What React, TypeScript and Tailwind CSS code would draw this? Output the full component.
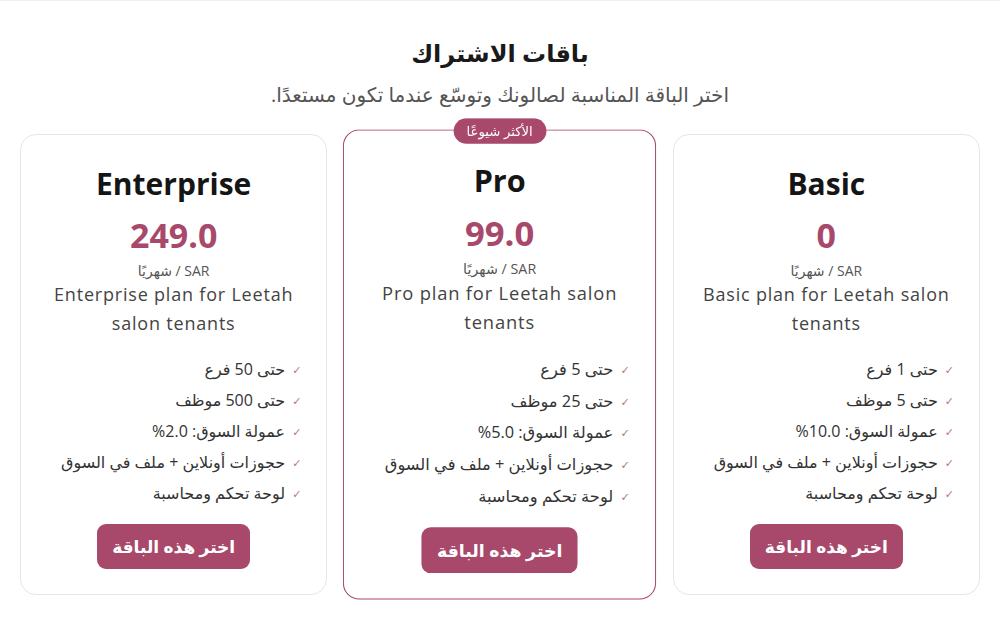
import React from "react";

const PLANS = [
  {
    name: "Basic",
    price: "0",
    desc: "Basic plan for Leetah salon tenants",
    features: ["حتى 1 فرع", "حتى 5 موظف", "عمولة السوق: 10.0%", "حجوزات أونلاين + ملف في السوق", "لوحة تحكم ومحاسبة"],
    popular: false,
  },
  {
    name: "Pro",
    price: "99.0",
    desc: "Pro plan for Leetah salon tenants",
    features: ["حتى 5 فرع", "حتى 25 موظف", "عمولة السوق: 5.0%", "حجوزات أونلاين + ملف في السوق", "لوحة تحكم ومحاسبة"],
    popular: true,
  },
  {
    name: "Enterprise",
    price: "249.0",
    desc: "Enterprise plan for Leetah salon tenants",
    features: ["حتى 50 فرع", "حتى 500 موظف", "عمولة السوق: 2.0%", "حجوزات أونلاين + ملف في السوق", "لوحة تحكم ومحاسبة"],
    popular: false,
  },
];

const FONT = "[font-family:'Open_Sans','DejaVu_Sans',sans-serif]";

export default function App() {
  return (
    <div dir="rtl" className={`min-h-[635px] bg-white border-t border-[#f3eef0] ${FONT}`}>
      {/* Header */}
      <div className="text-center pt-[34px]">
        <h1 className="text-[24px] leading-[36px] font-bold text-[#1a1a1a]">باقات الاشتراك</h1>
        <p className="mt-[10px] text-[20px] leading-[28px] text-[#555]">
          اختر الباقة المناسبة لصالونك وتوسّع عندما تكون مستعدًا.
        </p>
      </div>

      {/* Plans */}
      <div className="grid grid-cols-3 gap-[19px] px-5 mt-[25px]">
        {PLANS.map((p) => (
          <div
            key={p.name}
            className={`relative rounded-[16px] border bg-white px-6 pt-[31px] pb-[25px] text-center ${
              p.popular ? "border-[#a8486b] scale-[1.02]" : "border-[#e6e6e6]"
            }`}
          >
            {p.popular && (
              <span className="absolute -top-[12px] left-1/2 -translate-x-1/2 rounded-full bg-[#a8486b] px-[13px] text-[13px] leading-[25px] text-white whitespace-nowrap">
                الأكثر شيوعًا
              </span>
            )}
            <h2 dir="ltr" className="text-[30px] leading-[36px] font-bold text-[#151515]">
              {p.name}
            </h2>
            <div dir="ltr" className="mt-[13px] text-[34px] leading-[40px] font-bold text-[#a8486b]">
              {p.price}
            </div>
            <div className="mt-[6px] text-[14px] leading-[20px] text-[#555]">
              SAR / شهريًا
            </div>
            <p dir="ltr" className="-mt-[1px] text-[18px] leading-[29px] tracking-[0.8px] text-[#444]">
              {p.desc}
            </p>
            <ul className="mt-[16px] text-right">
              {p.features.map((f) => (
                <li key={f} className="flex items-center gap-[7px] pr-[1px] text-[16px] leading-[31px] text-[#333]">
                  <span className="text-[11px] text-[#b9738e]">✓</span>
                  <span>{f}</span>
                </li>
              ))}
            </ul>
            <button className="mt-[15px] h-[45px] w-[153px] rounded-[9px] bg-[#a8486b] text-[17px] font-bold text-white">
              اختر هذه الباقة
            </button>
          </div>
        ))}
      </div>
    </div>
  );
}
